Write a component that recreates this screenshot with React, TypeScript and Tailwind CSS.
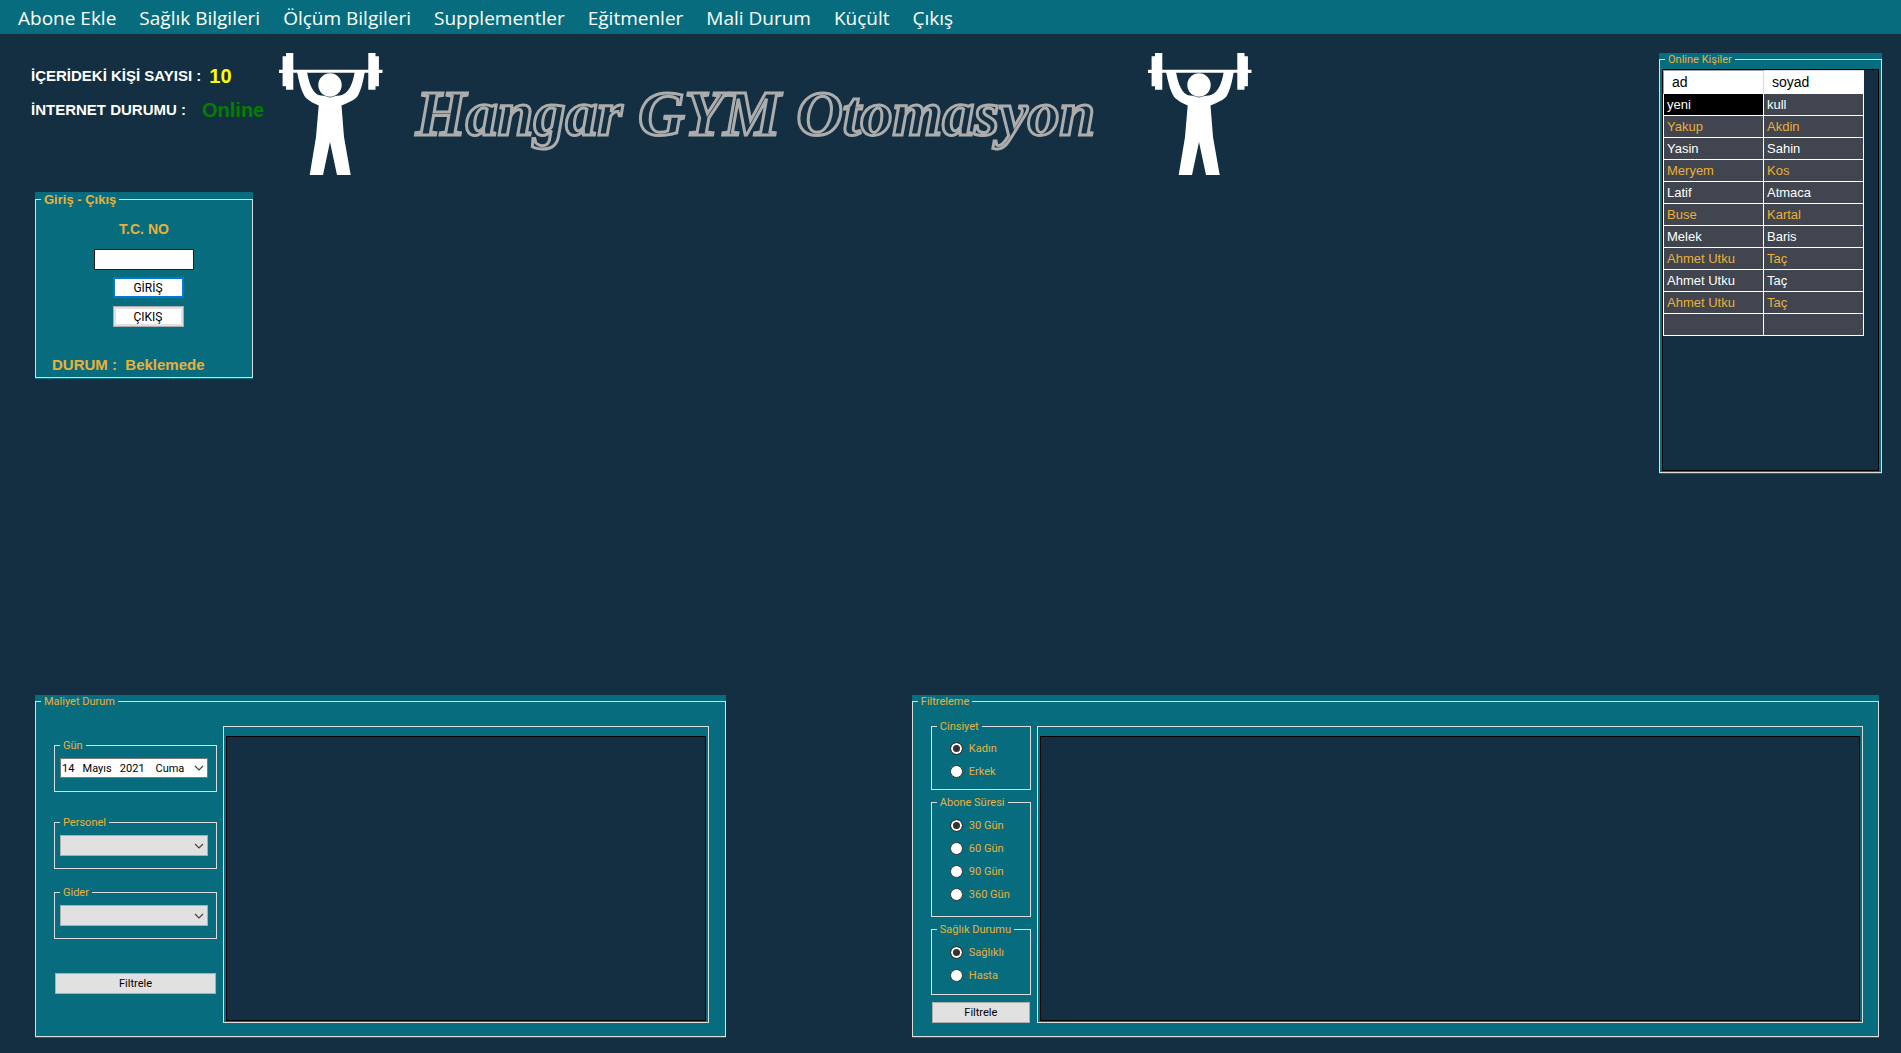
import React from "react";

const menuItems = [
  "Abone Ekle",
  "Sağlık Bilgileri",
  "Ölçüm Bilgileri",
  "Supplementler",
  "Eğitmenler",
  "Mali Durum",
  "Küçült",
  "Çıkış",
];

const people = [
  ["yeni", "kull"],
  ["Yakup", "Akdin"],
  ["Yasin", "Sahin"],
  ["Meryem", "Kos"],
  ["Latif", "Atmaca"],
  ["Buse", "Kartal"],
  ["Melek", "Baris"],
  ["Ahmet Utku", "Taç"],
  ["Ahmet Utku", "Taç"],
  ["Ahmet Utku", "Taç"],
  ["", ""],
];

function Lifter() {
  return (
    <svg viewBox="0 0 104 122" className="h-[122px] w-[104px] shrink-0" fill="#fff" aria-hidden="true">
      <path d="M7 0h7.300v36.700H7V33.300H3.600V20H0v-3.300h3.600V3.300H7z" />
      <path d="M96.500 0h-7.200v36.700h7.200v-3.400h3.400V20h3.600v-3.300h-3.600V3.300h-3.400z" />
      <path d="M14 16.700h76v3H14z" />
      <circle cx="51" cy="32" r="11.700" />
      <path d="M18 19H28C30 30 34 42 42 42.500C46 42.500 48 44 51 44.500C54 44 57 42.500 61 42.500C70 41 74 30 75.700 19H85.700C84 30 81 40 78 44C74 48 68 50 62.500 52.500L65 84L71.700 122H58L51 89L44 122H30.700L37 84L39.700 52.500C34 50 28 47 25.500 43C22 37 20 28 18 19z" />
    </svg>
  );
}

function Chevron() {
  return (
    <svg
      viewBox="0 0 10 6"
      className="pointer-events-none absolute right-[4px] top-1/2 h-[6px] w-[10px] -translate-y-1/2"
      fill="none"
      stroke="#444"
      strokeWidth="1.200"
      aria-hidden="true"
    >
      <path d="M1 1l4 4l4-4" />
    </svg>
  );
}

function Group({
  title,
  className = "",
  bodyClass = "",
  children,
}: {
  title: string;
  className?: string;
  bodyClass?: string;
  children?: React.ReactNode;
}) {
  return (
    <fieldset className={"min-w-0 border border-[#dcdcdc] " + className}>
      <legend className="ml-[5px] px-[3px] leading-[13px] text-[#e9b03a]">{title}</legend>
      <div className={bodyClass}>{children}</div>
    </fieldset>
  );
}

function Combo({ label }: { label: string }) {
  return (
    <div className="relative">
      <select
        aria-label={label}
        className="block h-[21px] w-full appearance-none border border-[#adadad] bg-[#e1e1e1] px-1 text-black"
      >
        <option></option>
      </select>
      <Chevron />
    </div>
  );
}

function Radios({ name, options }: { name: string; options: string[] }) {
  return (
    <div className="flex flex-col gap-[10px] pl-[18px]">
      {options.map((option, i) => (
        <label key={option} className="flex items-center gap-[6px] leading-[13px] text-[#e9b03a]">
          <input
            type="radio"
            name={name}
            defaultChecked={i === 0}
            className="size-[13px] shrink-0 appearance-none rounded-full border border-[#333] bg-white checked:bg-[#333] checked:shadow-[inset_0_0_0_2px_white]"
          />
          {option}
        </label>
      ))}
    </div>
  );
}

function FilterButton() {
  return (
    <button className="block h-[21px] w-full border border-[#adadad] bg-[#e1e1e1] leading-[13px] text-black">
      Filtrele
    </button>
  );
}

function EmptyGrid() {
  return (
    <div className="flex min-w-0 flex-1 border border-[#dcdcdc] px-[2px] pb-px pt-[9px]">
      <div className="flex-1 border border-black bg-[#132f41]" />
    </div>
  );
}

export default function App() {
  return (
    <div className="flex min-h-screen flex-col bg-[#132f41] font-['Liberation_Sans',sans-serif]">
      <nav className="flex h-[34px] shrink-0 items-center gap-[23px] bg-[#076d7e] pl-[18px] pt-[2px] font-['Open_Sans',sans-serif] text-[19px] leading-6 text-white">
        {menuItems.map((item) => (
          <button key={item} className="whitespace-nowrap">
            {item}
          </button>
        ))}
      </nav>

      <main className="flex flex-1 flex-col justify-between pb-[15px] pl-[35px] pr-[22px]">
        <div className="flex items-start justify-between">
          <div>
            <header className="flex h-[158px] items-start pt-[19px]">
              <div className="-ml-1 flex w-[248px] shrink-0 flex-col gap-[10px] whitespace-nowrap pt-[11px] text-[15px] font-bold leading-6 text-white">
                <p className="flex items-center gap-2">
                  İÇERİDEKİ KİŞİ SAYISI :<span className="text-[20px] text-[#ffff00]">10</span>
                </p>
                <p className="flex items-center gap-4">
                  İNTERNET DURUMU :<span className="text-[20px] text-[#008000]">Online</span>
                </p>
              </div>
              <Lifter />
              <h1 className="mx-[33px] w-[699px] whitespace-nowrap pt-[23px] font-['Liberation_Serif',serif] text-[64px] font-bold italic leading-[76px] text-transparent [-webkit-text-stroke:3px_#acacac]">
                Hangar GYM Otomasyon
              </h1>
              <Lifter />
            </header>

            <div className="w-[218px] bg-[#076d7e] pb-px">
              <fieldset className="h-[186px] border border-[#dcdcdc]">
                <legend className="ml-[5px] px-[3px] text-[13px] font-bold leading-[15px] text-[#e9b03a]">
                  Giriş - Çıkış
                </legend>
                <div className="flex flex-col items-center pt-[14px]">
                  <label htmlFor="tc" className="text-[14px] font-bold leading-[17px] text-[#e9b03a]">
                    T.C. NO
                  </label>
                  <input id="tc" className="mt-[11px] h-[21px] w-[100px] border border-[#222] bg-white px-1 text-[12px]" />
                  <button className="ml-2 mt-[7px] h-[21px] w-[71px] border-2 border-[#0078d7] bg-white font-['Roboto',sans-serif] text-[12px] leading-[16px] text-black">
                    GİRİŞ
                  </button>
                  <button className="ml-2 mt-2 h-[21px] w-[71px] border border-[#adadad] bg-white font-['Roboto',sans-serif] text-[12px] leading-[16px] text-black shadow-[inset_0_0_0_2px_#e1e1e1]">
                    ÇIKIŞ
                  </button>
                  <p className="mt-[29px] self-start pl-4 text-[15px] font-bold leading-[17px] text-[#e9b03a]">
                    DURUM :&nbsp; Beklemede
                  </p>
                </div>
              </fieldset>
            </div>
          </div>

          <section className="-mr-[3px] mt-[19px] w-[223px] shrink-0 bg-[#076d7e] pb-px font-['Roboto',sans-serif] text-[11px]">
            <Group title="Online Kişiler" bodyClass="px-[2px] pb-px pt-[3px]">
              <div className="min-h-[402px] border border-black bg-[#132f41]">
                <table className="w-[201px] table-fixed border-collapse border border-white text-left font-['Liberation_Sans',sans-serif] text-[13px] leading-4">
                  <thead>
                    <tr className="h-[23px] bg-white text-[14px] text-black">
                      <th className="border-l border-t border-[#a0a0a0] pl-2 font-normal">ad</th>
                      <th className="border-l border-t border-[#dcdcdc] pl-2 font-normal">soyad</th>
                    </tr>
                  </thead>
                  <tbody>
                    {people.map(([ad, soyad], i) => (
                      <tr key={i} className={"h-[22px] bg-[#40454f] " + (i % 2 ? "text-[#e9b03a]" : "text-white")}>
                        <td className={"border border-white pl-[3px] pt-px " + (i === 0 ? "bg-black" : "")}>{ad}</td>
                        <td className="border border-white pl-[3px] pt-px">{soyad}</td>
                      </tr>
                    ))}
                  </tbody>
                </table>
              </div>
            </Group>
          </section>
        </div>

        <div className="grid grid-cols-[minmax(0,5fr)_minmax(0,7fr)] gap-[186px] font-['Roboto',sans-serif] text-[11px]">
          <section className="bg-[#076d7e] pb-px">
            <Group
              title="Maliyet Durum"
              className="h-[342px]"
              bodyClass="flex h-full gap-[6px] pb-[13px] pl-[18px] pr-[16px] pt-[18px]"
            >
              <div className="flex w-[163px] shrink-0 flex-col pt-[13px]">
                <Group title="Gün" className="h-[53px]" bodyClass="pl-[5px] pr-2 pt-[6px]">
                  <div className="relative">
                    <input
                      aria-label="Gün"
                      defaultValue="14   Mayıs   2021    Cuma"
                      className="block h-5 w-full border border-[#7a7a7a] bg-white pl-px text-black"
                    />
                    <Chevron />
                  </div>
                </Group>
                <Group title="Personel" className="mt-6 h-[53px]" bodyClass="pl-[5px] pr-2 pt-[6px]">
                  <Combo label="Personel" />
                </Group>
                <Group title="Gider" className="mt-[17px] h-[53px]" bodyClass="pl-[5px] pr-2 pt-[6px]">
                  <Combo label="Gider" />
                </Group>
                <div className="px-px pt-[34px]">
                  <FilterButton />
                </div>
              </div>
              <EmptyGrid />
            </Group>
          </section>

          <section className="bg-[#076d7e] pb-px">
            <Group
              title="Filtreleme"
              className="h-[342px]"
              bodyClass="flex h-full gap-[6px] pb-[13px] pl-[18px] pr-[15px] pt-[18px]"
            >
              <div className="-mt-[6px] flex w-[100px] shrink-0 flex-col">
                <Group title="Cinsiyet" className="h-[70px]" bodyClass="pt-[9px]">
                  <Radios name="cinsiyet" options={["Kadın", "Erkek"]} />
                </Group>
                <Group title="Abone Süresi" className="mt-[6px] h-[121px]" bodyClass="pt-[10px]">
                  <Radios name="sure" options={["30 Gün", "60 Gün", "90 Gün", "360 Gün"]} />
                </Group>
                <Group title="Sağlık Durumu" className="mt-[6px] h-[72px]" bodyClass="pt-[10px]">
                  <Radios name="saglik" options={["Sağlıklı", "Hasta"]} />
                </Group>
                <div className="px-px pt-[7px]">
                  <FilterButton />
                </div>
              </div>
              <EmptyGrid />
            </Group>
          </section>
        </div>
      </main>
    </div>
  );
}
